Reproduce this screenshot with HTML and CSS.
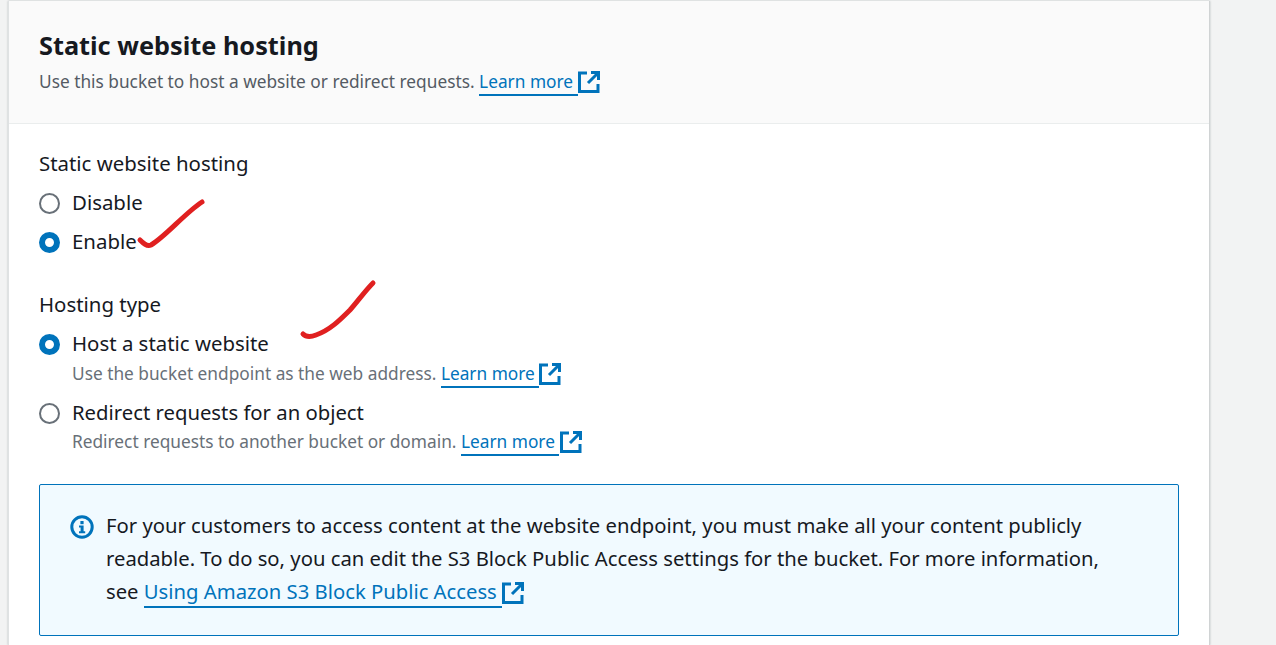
FILE: index.html
```html
<!DOCTYPE html>
<html lang="en">
<head>
<meta charset="utf-8">
<title>Static website hosting</title>
<link rel="stylesheet" href="styles.css">
</head>
<body>
<svg width="0" height="0" class="defs" aria-hidden="true">
  <symbol id="ext" viewBox="0 0 22 22">
    <path d="M9 2H1.5V20.5H20V13" fill="none" stroke="currentColor" stroke-width="3"/>
    <path d="M13 1.5H20.5V9M20 2L10 12" fill="none" stroke="currentColor" stroke-width="3"/>
  </symbol>
</svg>
<main class="card">
  <header class="card-head">
    <h2 class="title">Static website hosting</h2>
    <p class="sub">Use this bucket to host a website or redirect requests. <a class="link" href="#">Learn more </a><svg class="ext"><use href="#ext"/></svg></p>
  </header>
  <section class="card-body">
    <div class="label">Static website hosting</div>
    <div class="radios">
      <div class="radio"><span class="dot"></span><span class="opt">Disable</span></div>
      <div class="radio"><span class="dot on"></span><span class="opt">Enable</span></div>
    </div>
    <div class="label second">Hosting type</div>
    <div class="radios-tall">
      <div class="radio"><span class="dot on"></span><span class="opt">Host a static website</span></div>
      <p class="desc">Use the bucket endpoint as the web address. <a class="link" href="#">Learn more </a><svg class="ext"><use href="#ext"/></svg></p>
      <div class="radio next"><span class="dot"></span><span class="opt">Redirect requests for an object</span></div>
      <p class="desc">Redirect requests to another bucket or domain. <a class="link" href="#">Learn more </a><svg class="ext"><use href="#ext"/></svg></p>
    </div>
    <div class="alert">
      <svg class="info" viewBox="0 0 24 24"><circle cx="12" cy="12" r="10.2" fill="none" stroke="currentColor" stroke-width="3"/><rect x="10.4" y="6" width="3.2" height="3.2" fill="currentColor"/><path d="M9 10.6H13.6V16.2H15.2V18.2H9V16.2H10.6V12.6H9Z" fill="currentColor"/></svg>
      <p class="alert-text">For your customers to access content at the website endpoint, you must make all your content publicly readable. To do so, you can edit the S3 Block Public Access settings for the bucket. For more information, see <a class="link" href="#">Using Amazon S3 Block Public Access </a><svg class="ext"><use href="#ext"/></svg></p>
    </div>
  </section>
</main>
<svg class="marks" width="1276" height="645" viewBox="0 0 1276 645" aria-hidden="true">
  <path d="M140 240C143 243 147 247 151 245C165 237 185 213 202 202" />
  <path d="M303 334C306 337 311 337 316 335C330 330 340 320 350 310C358 301 365 291 373 283" />
</svg>
</body>
</html>
```
FILE: styles.css
```css
* { box-sizing: border-box; }
html, body { height: 100%; }
body {
  margin: 0;
  height: 645px;
  overflow: hidden;
  background: #f2f3f3;
  padding: 1px 66px 0 8px;
  font-family: "Noto Sans", "Liberation Sans", sans-serif;
  color: #16191f;
  position: relative;
}
.defs { position: absolute; }
.card {
  background: #fff;
  height: 644px;
  border-left: 1px solid #dfe2e3;
  border-right: 1px solid #d0d3d4;
  box-shadow: 0 0 2px rgba(0, 28, 36, .25);
}
.card-head {
  background: #fafafa;
  height: 123px;
  padding: 26px 30px 0;
  border-bottom: 1px solid #eaeded;
}
.title {
  margin: 0;
  font-size: 25.3px;
  line-height: 36px;
  font-weight: 700;
}
.sub {
  margin: 0;
  padding-top: 2px;
  font-size: 17.3px;
  line-height: 33px;
  color: #545b64;
}
.link {
  color: #0073bb;
  text-decoration: none;
  border-bottom: 2px solid #0073bb;
  padding-bottom: 1px;
}
.ext {
  width: 22px;
  height: 22px;
  color: #0073bb;
  vertical-align: -5px;
}
.card-body { padding: 23px 30px 0; }
.label {
  font-size: 20.4px;
  line-height: 32px;
}
.label.second { margin-top: 31px; }
.radios { margin-top: 7px; }
.radios .radio + .radio { margin-top: 7px; }
.radios-tall { margin-top: 7px; }
.radio {
  display: flex;
  align-items: center;
  gap: 12px;
  height: 32px;
  font-size: 20.4px;
}
.radio.next { margin-top: 9px; font-size: 20.3px; }
.dot {
  width: 21px;
  height: 21px;
  margin-top: 2px;
  border-radius: 50%;
  border: 2px solid #687078;
  background: #fff;
  flex: none;
}
.dot.on { border: 6px solid #0073bb; }
.desc {
  margin: 2px 0 0;
  padding-left: 33px;
  font-size: 17.3px;
  line-height: 26px;
  color: #687078;
}
.radio.next + .desc { margin-top: 1px; }
.radio.next + .desc .ext { margin-left: 1px; }
.alert {
  margin-top: 29px;
  height: 152px;
  background: #f1faff;
  border: 1px solid #0073bb;
  border-radius: 2px;
  padding: 24px 50px 0 30px;
  display: flex;
  gap: 12px;
}
.info {
  width: 24px;
  height: 24px;
  color: #0073bb;
  flex: none;
  margin-top: 6px;
}
.alert-text {
  margin: 0;
  font-size: 20.25px;
  line-height: 33px;
}
.marks {
  position: absolute;
  left: 0;
  top: 0;
  pointer-events: none;
}
.marks path {
  fill: none;
  stroke: #e02020;
  stroke-width: 5;
  stroke-linecap: round;
  stroke-linejoin: round;
}
```
